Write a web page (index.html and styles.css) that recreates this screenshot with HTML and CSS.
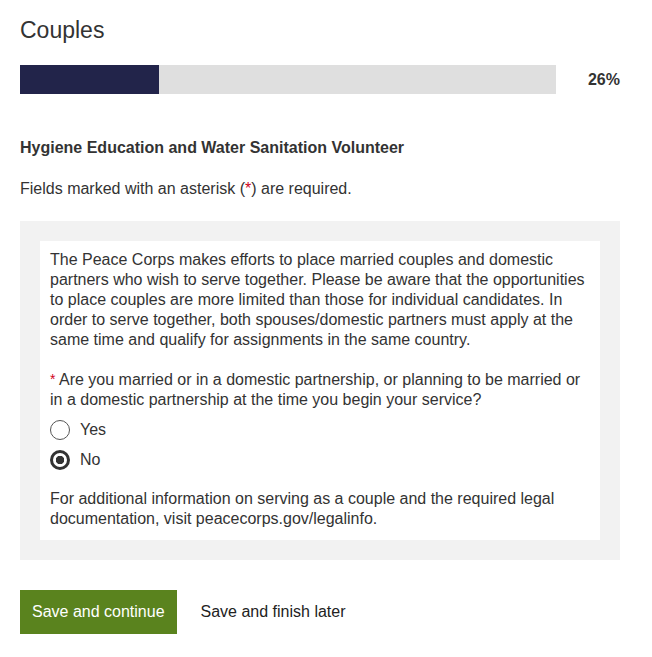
FILE: index.html
```html
<!doctype html>
<html lang="en">
<head>
	<meta charset="UTF-8">
	<title>Couples</title>
	<link rel="stylesheet" href="styles.css">
</head>
<body>
<div class="page">
	<h1 class="title">Couples</h1>
	<div class="progress">
		<div class="progress_track"><div class="progress_fill" style="width:26%"></div></div>
		<span class="progress_num">26%</span>
	</div>
	<h2 class="role">Hygiene Education and Water Sanitation Volunteer</h2>
	<p class="note">Fields marked with an asterisk (<span class="req">*</span>) are required.</p>
	<div class="panel">
		<div class="panel_inner">
			<p class="intro">The Peace Corps makes efforts to place married couples and domestic partners who wish to serve together. Please be aware that the opportunities to place couples are more limited than those for individual candidates. In order to serve together, both spouses/domestic partners must apply at the same time and qualify for assignments in the same country.</p>
			<p class="question"><span class="req req_small">*</span> Are you married or in a domestic partnership, or planning to be married or in a domestic partnership at the time you begin your service?</p>
			<label class="opt"><input type="radio" name="couple" value="yes"> Yes</label>
			<label class="opt"><input type="radio" name="couple" value="no" checked> No</label>
			<p class="info">For additional information on serving as a couple and the required legal documentation, visit peacecorps.gov/legalinfo.</p>
		</div>
	</div>
	<div class="actions">
		<button class="btn_save">Save and continue</button>
		<a class="link_later" href="#">Save and finish later</a>
	</div>
</div>
</body>
</html>
```
FILE: styles.css
```css
body{margin:0;font-family:"Liberation Sans",Arial,sans-serif;color:#333;background:#fff;}
.page{width:600px;padding:0 20px;}
.title{margin:0;padding-top:16px;height:34px;font-size:23px;font-weight:normal;line-height:28px;}
.progress{display:flex;align-items:center;margin-top:15px;height:29px;}
.progress_track{width:536px;height:29px;background:#dfdfdf;}
.progress_fill{height:100%;background:#22244a;}
.progress_num{margin-left:auto;font-size:16px;font-weight:bold;}
.role{margin:44px 0 0;font-size:16px;line-height:20px;}
.note{margin:21px 0 0;font-size:16px;line-height:20px;}
.req{color:#d0021b;}
.req_small{font-size:14px;vertical-align:top;line-height:18px;}
.panel{margin-top:22px;padding:20px;background:#f2f2f2;}
.panel_inner{background:#fff;padding:9px 10px 11px;font-size:16px;line-height:20px;}
.panel_inner p{margin:0;}
.question{margin-top:20px !important;}
.opt{display:flex;align-items:center;height:30px;}
.opt input{appearance:none;-webkit-appearance:none;width:20px;height:20px;margin:0 10px 0 0;border:1px solid #555;border-radius:50%;background:#fff;}
.opt input:checked{border:3px solid #333;background:radial-gradient(circle,#333 0 4px,#fff 4.5px);}
.opt:first-of-type{margin-top:5px;}
.info{margin-top:14px !important;}
.actions{display:flex;align-items:center;margin-top:30px;}
.btn_save{height:44px;padding:0 12px;border:0;background:#5a831e;color:#fff;font:16px "Liberation Sans",Arial,sans-serif;}
.link_later{margin-left:24px;color:#222;text-decoration:none;font-size:16px;}
```
